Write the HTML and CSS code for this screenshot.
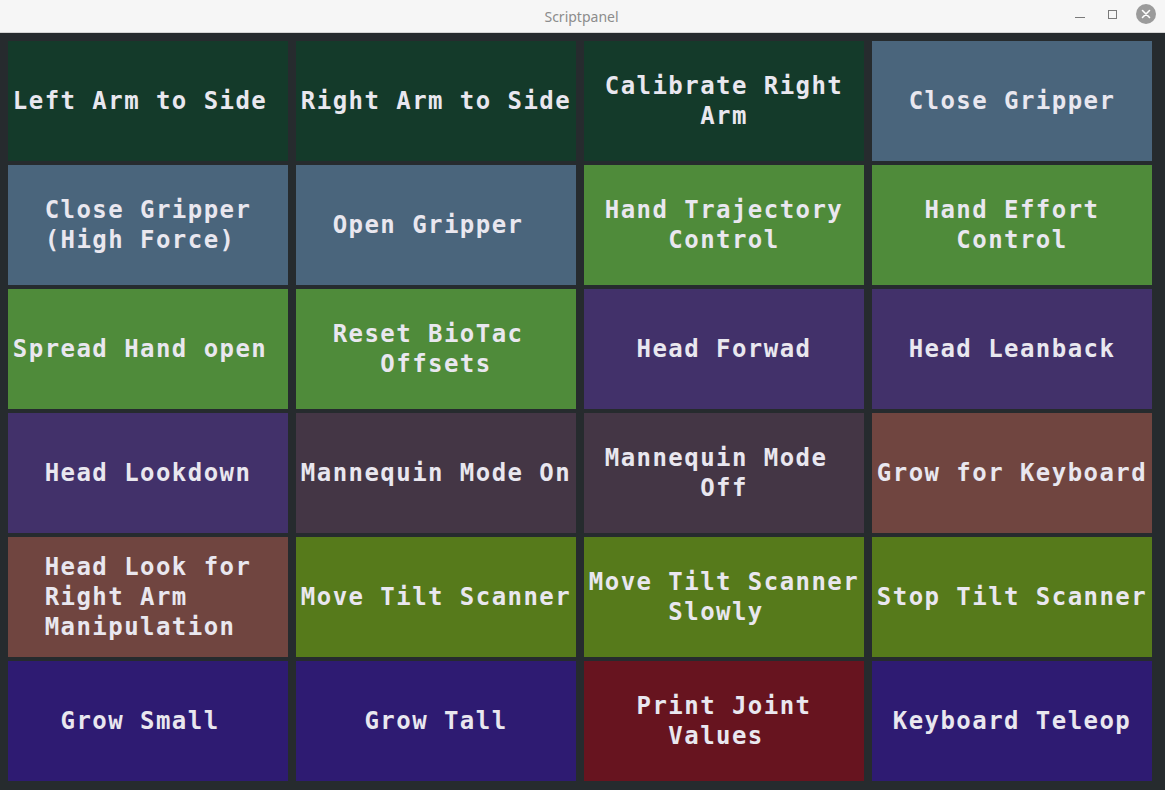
FILE: index.html
```html
<!DOCTYPE html>
<html>
<head>
<meta charset="utf-8">
<link rel="stylesheet" href="styles.css">
<title>Scriptpanel</title>
</head>
<body>
<div class="titlebar">
  <div class="title">Scriptpanel</div>
  <div class="controls">
    <span class="ctl min"><svg width="12" height="12" viewBox="0 0 12 12"><line x1="1" y1="9.5" x2="11" y2="9.5" stroke="#7a7a7a" stroke-width="1"/></svg></span>
    <span class="ctl max"><svg width="12" height="12" viewBox="0 0 12 12"><rect x="2.5" y="2.5" width="8" height="8" fill="none" stroke="#7a7a7a" stroke-width="1"/></svg></span>
    <span class="ctl close"><svg width="20" height="20" viewBox="0 0 20 20"><circle cx="10" cy="10" r="10" fill="#9b9b9b"/><path d="M6.5 6.5 L13.5 13.5 M13.5 6.5 L6.5 13.5" stroke="#ffffff" stroke-width="1.6" stroke-linecap="round"/></svg></span>
  </div>
</div>
<div class="panel">
  <div class="btn c-dgreen"><div class="label">Left Arm to Side&nbsp;</div></div>
  <div class="btn c-dgreen"><div class="label">Right Arm to Side</div></div>
  <div class="btn c-dgreen"><div class="label">Calibrate Right<br>Arm</div></div>
  <div class="btn c-slate"><div class="label">Close Gripper</div></div>

  <div class="btn c-slate"><div class="label">Close Gripper<br>(High Force)&nbsp;</div></div>
  <div class="btn c-slate"><div class="label">Open Gripper&nbsp;</div></div>
  <div class="btn c-green"><div class="label">Hand Trajectory<br>Control</div></div>
  <div class="btn c-green"><div class="label">Hand Effort<br>Control</div></div>

  <div class="btn c-green"><div class="label">Spread Hand open&nbsp;</div></div>
  <div class="btn c-green"><div class="label">Reset BioTac&nbsp;<br>Offsets</div></div>
  <div class="btn c-purple"><div class="label">Head Forwad</div></div>
  <div class="btn c-purple"><div class="label">Head Leanback</div></div>

  <div class="btn c-purple"><div class="label">Head Lookdown</div></div>
  <div class="btn c-mauve"><div class="label">Mannequin Mode On</div></div>
  <div class="btn c-mauve"><div class="label">Mannequin Mode&nbsp;<br>Off</div></div>
  <div class="btn c-brown"><div class="label">Grow for Keyboard</div></div>

  <div class="btn c-brown"><div class="label left">Head Look for<br>Right Arm<br>Manipulation</div></div>
  <div class="btn c-olive"><div class="label">Move Tilt Scanner</div></div>
  <div class="btn c-olive"><div class="label">Move Tilt Scanner<br>Slowly&nbsp;</div></div>
  <div class="btn c-olive"><div class="label">Stop Tilt Scanner</div></div>

  <div class="btn c-indigo"><div class="label">Grow Small&nbsp;</div></div>
  <div class="btn c-indigo"><div class="label">Grow Tall</div></div>
  <div class="btn c-crimson"><div class="label">Print Joint<br>Values&nbsp;</div></div>
  <div class="btn c-indigo"><div class="label">Keyboard Teleop</div></div>
</div>
</body>
</html>
```
FILE: styles.css
```css
html, body {
  margin: 0;
  padding: 0;
}
body {
  width: 1165px;
  height: 790px;
  background: #262b2e;
  overflow: hidden;
}
.titlebar {
  height: 32px;
  background: #f6f6f6;
  border-bottom: 1px solid #d4d4d4;
  position: relative;
  display: flex;
  align-items: center;
  justify-content: center;
}
.title {
  font-family: "Noto Sans", "DejaVu Sans", sans-serif;
  font-size: 14px;
  color: #8c8c8c;
  margin-left: -2px;
}
.controls {
  position: absolute;
  right: 9px;
  top: 4px;
  display: flex;
  align-items: center;
}
.ctl {
  display: flex;
  align-items: center;
  justify-content: center;
  height: 20px;
}
.ctl.min { width: 12px; margin-right: 20px; }
.ctl.max { width: 12px; margin-right: 18px; }
.ctl.close { width: 20px; }
.panel {
  display: grid;
  grid-template-columns: repeat(4, 280px);
  grid-auto-rows: 120px;
  column-gap: 8px;
  row-gap: 4px;
  padding: 8px 0 0 8px;
}
.btn {
  display: flex;
  align-items: center;
  justify-content: center;
}
.label {
  font-family: "DejaVu Sans Mono", "Liberation Mono", monospace;
  font-weight: bold;
  font-size: 24px;
  letter-spacing: 1.45px;
  line-height: 30px;
  color: #e9e7ef;
  text-align: center;
  white-space: nowrap;
}
.label.left {
  text-align: left;
}
.c-dgreen { background: #143a2a; }
.c-slate { background: #4a657c; }
.c-green { background: #4f8b3a; }
.c-purple { background: #42316a; }
.c-mauve { background: #443645; }
.c-brown { background: #704540; }
.c-olive { background: #567a1b; }
.c-indigo { background: #2e1b72; }
.c-crimson { background: #67141f; }
```
